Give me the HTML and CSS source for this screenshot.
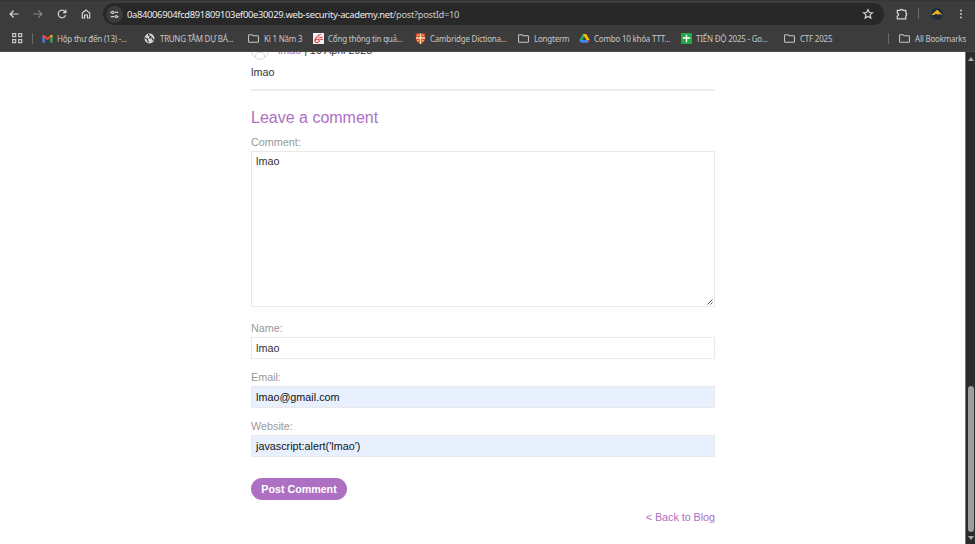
FILE: index.html
```html
<!DOCTYPE html>
<html lang="en">
<head>
<meta charset="utf-8">
<title>Post</title>
<link rel="stylesheet" href="styles.css">
</head>
<body>
<svg class="defs" width="0" height="0">
  <symbol id="folder" viewBox="0 0 12 12"><path d="M1.4 1.800h3l1.200 1.300h5q.8 0 .8.8v5.500q0 .8-.8.8H1.400q-.8 0-.8-.8V2.600q0-.8.8-.8z" fill="none" stroke="#c7c7c7" stroke-width="1.100"/></symbol>
</svg>
<header class="browser">
  <div class="toolbar">
    <svg class="nav back" viewBox="0 0 12 12"><path d="M10.500 6H2.300M5.600 2.500 2.100 6l3.500 3.500"/></svg>
    <svg class="nav forward" viewBox="0 0 12 12"><path d="M1.500 6h8.200M6.400 2.500 9.900 6 6.400 9.500"/></svg>
    <svg class="nav reload" viewBox="0 0 12 12"><path d="M9.600 7.100A3.800 3.800 0 1 1 8.900 3.500L9.800 4.600M9.900 1.800v2.900H7"/></svg>
    <svg class="nav home" viewBox="0 0 12 12"><path d="M2.300 5 6 2.100 9.700 5v5H7.400V7H4.600v3H2.300z"/></svg>
    <div class="address">
      <span class="site"><svg viewBox="0 0 12 12"><path d="M1.500 3.700h1.700M6.400 3.700H10M2 8.300h3.500M9 8.300h1.500"/><circle cx="4.200" cy="3.700" r="1.200"/><circle cx="7.800" cy="8.300" r="1.200"/></svg></span>
      <span class="url">0a84006904fcd891809103ef00e30029.web-security-academy.net<span class="path">/post?postId=10</span></span>
      <svg class="nav star" viewBox="0 0 12 12"><path d="m6 1.600 1.300 2.900 3.100.3-2.300 2.100.7 3.100L6 8.400 3.200 10l.7-3.100-2.300-2.100 3.100-.3z"/></svg>
    </div>
    <svg class="nav puzzle" viewBox="0 0 12 12"><path d="M1.300 2.300H4Q5.500.6 7 2.300h2.800v2.500q1.800 1.500 0 3v3H1.300V8.300q2.400-1.700 0-3.400z" stroke-width="1.300"/></svg>
    <i class="rule"></i>
    <svg class="avatar" viewBox="0 0 12 12"><circle cx="6" cy="6" r="6" fill="#202d3b"/><path d="M.4 7 4 3.800 6.200 1.800l2 2L11.500 7 8.200 6 6.800 6.800 5 5.500 3.200 7z" fill="#f3b51b"/></svg>
    <svg class="dots" viewBox="0 0 12 12"><circle cx="6" cy="1.700" r="1.200"/><circle cx="6" cy="6" r="1.200"/><circle cx="6" cy="10.300" r="1.200"/></svg>
  </div>
  <nav class="bookmarks">
    <svg class="apps" viewBox="0 0 12 12"><path d="M1.700 1.700h3v3h-3zM7.700 1.700h3v3h-3zM1.700 7.700h3v3h-3zM7.700 7.700h3v3h-3z"/></svg>
    <i class="rule"></i>
    <a class="bm w102"><svg viewBox="0 0 12 12"><path d="M.5 3v7.500H3V5.200z" fill="#4285f4"/><path d="M11.500 3v7.500H9V5.200z" fill="#34a853"/><path d="M9 5.200V2.500q2-1.500 2.500.2v1z" fill="#fbbc04"/><path d="M.5 2.700Q1 1 3 2.500l3 2.300 3-2.300v3L6 7.800.5 3.700z" fill="#ea4335"/></svg><span>Hộp thư đến (13) -...</span></a>
    <a class="bm w104 wide"><svg viewBox="0 0 12 12"><circle cx="6" cy="6" r="5.400" fill="#d6d6d6"/><path d="M1 5.200 4 7v1.500L5.200 10M5 1v1.500L7.500 4 6 5.500h3l.6 2h1.600" fill="none" stroke="#3c3c3c" stroke-width="1.200"/></svg><span class="tight">TRUNG TÂM DỰ BÁ...</span></a>
    <a class="bm w65 wide"><svg><use href="#folder"/></svg><span>Kì 1 Năm 3</span></a>
    <a class="bm w102"><svg viewBox="0 0 12 12"><path d="M0 0h12v12H0z" fill="#f4eeee"/><path d="M8.500 1.200Q2 5 2 8.300q.3 2.700 3.200 2 2.600-1.200 1-3Q4.500 6.200 2.500 8M6 5.500l4.500-1.200M7 7.500l4-.8" fill="none" stroke="#d83b3b" stroke-width="1.100"/></svg><span>Cổng thông tin quả...</span></a>
    <a class="bm w103"><svg viewBox="0 0 12 12"><path d="M1 .5h10V7q-.5 3-5 5Q1.500 10 1 7z" fill="#d84a35"/><path d="M6 .5V12M1 5.500h10" stroke="#f5dfb0" stroke-width="1.600"/><path d="M2.200 2.300h2M7.800 2.300h2M2.300 8.300h2M7.700 8.300h2" stroke="#efb847" stroke-width="1.300"/></svg><span>Cambridge Dictiona...</span></a>
    <a class="bm w61 wide"><svg><use href="#folder"/></svg><span>Longterm</span></a>
    <a class="bm w102"><svg viewBox="0 0 12 12"><path d="M4.200 1h3.600L6 4.200 2.300 10.600.4 7.500z" fill="#2aa853"/><path d="M4.200 1h3.600l3.800 6.500H8z" fill="#fbbc04"/><path d="M2.400 7.500h9.200l-1.900 3.200H2.300L.5 7.600z" fill="#4285f4"/><path d="M9 7.500h2.600l-1.500 2.600z" fill="#ea4335"/><path d="m6 4.400 1.800 3.100H4.200z" fill="#3c3c3c"/></svg><span>Combo 10 khóa TTT...</span></a>
    <a class="bm w103"><svg viewBox="0 0 12 12"><rect width="12" height="12" rx="1" fill="#26a745"/><path d="M6 2v8M2 5.500h8" stroke="#fff" stroke-width="1.500"/></svg><span>TIẾN ĐỘ 2025 - Go...</span></a>
    <a class="bm wide"><svg><use href="#folder"/></svg><span>CTF 2025</span></a>
    <i class="rule last"></i>
    <a class="bm wide"><svg><use href="#folder"/></svg><span>All Bookmarks</span></a>
  </nav>
</header>
<div class="viewport">
  <main class="page">
    <div class="content">
      <div class="author"><svg viewBox="0 0 18 18"><g fill="none" stroke="#dadada"><circle cx="9" cy="9" r="8.300"/><circle cx="9" cy="7" r="3.500"/><path d="M4.500 16v-2q0-3 3-3.500h3q3 .5 3 3.500v2"/></g></svg><span><a>lmao</a> | 16 April 2025</span></div>
      <p class="text">lmao</p>
      <hr>
      <h1>Leave a comment</h1>
      <form>
        <label>Comment:</label>
        <div class="field area">lmao<svg class="grip" viewBox="0 0 6 6"><path d="M.5 5.500l5-5M3.500 5.500l2-2" stroke="#555"/></svg></div>
        <label>Name:</label>
        <div class="field">lmao</div>
        <label>Email:</label>
        <div class="field filled">lmao@gmail.com</div>
        <label>Website:</label>
        <div class="field filled">javascript:alert('lmao')</div>
        <button type="button">Post Comment</button>
      </form>
      <a class="return">&lt; Back to Blog</a>
    </div>
  </main>
  <aside class="scrollbar"><i class="up"></i><i class="thumb"></i><i class="down"></i></aside>
</div>
</body>
</html>
```

FILE: styles.css
```css
* { box-sizing: border-box; }
body { margin: 0; width: 975px; height: 544px; overflow: hidden; display: flex; flex-direction: column; background: #fff; font-family: "Liberation Sans", Arial, sans-serif; }
.defs { position: absolute; }
svg { flex: none; display: block; }
.browser { height: 52px; flex: none; background: #3c3c3c; border-top: 1px solid #353535; border-bottom: 1px solid #4a4a4a; font-family: "Noto Sans", sans-serif; color: #c7c7c7; }
.toolbar { height: 25px; display: flex; align-items: center; padding-left: 8px; }
.nav { width: 12px; height: 12px; fill: none; stroke: #d4d4d4; stroke-width: 1.2; }
.back { margin-right: 12px; }
.forward { margin-right: 12px; stroke: #858585; }
.reload { margin-right: 12px; }
.home { margin-right: 11px; }
.address { width: 781px; height: 22px; margin-top: 1px; border-radius: 11px; background: #282828; display: flex; align-items: center; padding: 0 10px 0 3px; }
.site { width: 17px; height: 17px; border-radius: 50%; background: #3c3c3c; display: grid; place-items: center; margin-right: 4px; }
.site svg { width: 11px; height: 11px; fill: none; stroke: #d4d4d4; stroke-width: 1.2; }
.url { font-size: 9.4px; color: #ececec; white-space: nowrap; letter-spacing: -.325px; }
.path { color: #c9c9c9; }
.star { margin-left: auto; }
.puzzle { margin-left: 12px; }
.rule { width: 1px; height: 11px; background: #6a6a6a; flex: none; }
.toolbar .rule { margin-left: 10px; }
.avatar { width: 12px; height: 12px; margin-left: 12px; }
.dots { width: 10px; height: 10px; margin-left: 13px; fill: #ccc; }
.bookmarks { height: 24px; display: flex; align-items: center; padding-left: 11px; font-size: 8px; letter-spacing: -.22px; white-space: nowrap; }
.apps { width: 12px; height: 12px; fill: none; stroke: #c7c7c7; stroke-width: 1.2; margin-right: 9px; }
.bookmarks .rule { margin-right: 9px; }
.bookmarks .last { margin-left: auto; margin-right: 10px; }
.bm { display: flex; align-items: center; gap: 4px; flex: none; }
.bm.wide { gap: 5px; }
.bm svg { width: 11px; height: 11px; }
.tight { letter-spacing: -.3px; }
.bookmarks > .bm:last-child { width: 76px; }
.w102 { width: 102px; } .w103 { width: 103px; } .w104 { width: 104px; } .w65 { width: 65px; } .w61 { width: 61px; }
.viewport { flex: 1; min-height: 0; display: flex; }
.page { width: 965px; height: 492px; overflow: hidden; }
.content { width: 464px; margin-left: 251px; display: flex; flex-direction: column; font-size: 10.8px; line-height: 13px; color: #333; }
.author { height: 18px; margin-top: -10px; display: flex; align-items: flex-start; gap: 9px; }
.author svg { width: 18px; height: 18px; }
.author span { margin-top: 2px; letter-spacing: -.05px; }
.author a { color: #a86cc0; }
.text { margin: 6px 0 0; }
hr { width: 100%; height: 2px; margin: 10px 0 16px; border: 0; background: #ececec; }
h1 { margin: 0; font-size: 16px; line-height: 21px; font-weight: 400; color: #ad6fc3; }
form { display: flex; flex-direction: column; align-items: stretch; padding-top: 8px; }
label { color: #999; margin-bottom: 2px; }
.field { height: 22px; border: 1px solid #e9e9e9; padding: 4px; line-height: 13px; margin-bottom: 12px; }
.area { height: 156px; margin-bottom: 15px; padding-top: 3px; position: relative; }
.grip { position: absolute; right: 1px; bottom: 1px; width: 6px; height: 6px; }
.filled { background: #e8f0fe; color: #111; }
button { align-self: flex-start; width: 96px; height: 22px; margin-top: 9px; padding: 0 0 1px; border: 0; border-radius: 11px; background: #ad70c3; color: #fff; font: bold 10.7px "Liberation Sans", Arial, sans-serif; }
.return { align-self: flex-end; margin-top: 11px; color: #ad6fc3; letter-spacing: -.05px; }
.scrollbar { width: 10px; background: #2b2b2b; display: flex; flex-direction: column; align-items: center; border-left: 1px solid #777; }
.up { margin-top: 5px; border: 3px solid transparent; border-top: 0; border-bottom: 4px solid #aaa; }
.thumb { width: 6px; height: 146px; margin-top: auto; border-radius: 3px; background: #9e9e9e; }
.down { margin: 4px 0 4px; border: 3px solid transparent; border-bottom: 0; border-top: 4px solid #aaa; }
```
